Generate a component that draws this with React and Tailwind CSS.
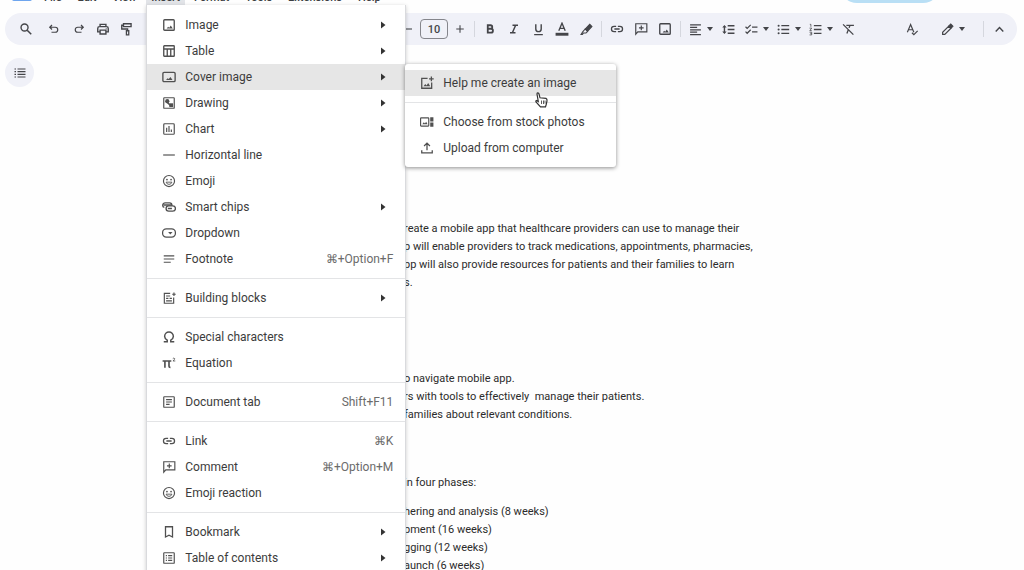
import React from "react";

function Svg({ size = 14, children, className = "" }) {
  return (
    <svg
      width={size}
      height={size}
      viewBox="0 0 24 24"
      fill="none"
      stroke="currentColor"
      strokeWidth="2"
      aria-hidden="true"
      className={"shrink-0 " + className}
    >
      {children}
    </svg>
  );
}

const fill = { fill: "currentColor", stroke: "none" };

const shapes = {
  search: (
    <>
      <circle cx="9.5" cy="9.5" r="6" strokeWidth="2.4" />
      <path d="M14 14l7 7" strokeWidth="2.6" />
    </>
  ),
  undo: <path d="M8 4L3.5 8.5 8 13M4 8.5h10.5a5 5 0 010 10H7" strokeWidth="2.4" />,
  redo: <path d="M16 4l4.500 4.500L16 13M20 8.500H9.500a5 5 0 000 10H17" strokeWidth="2.4" />,
  print: (
    <>
      <path d="M7 8V4h10v4M7 17H3v-6a3 3 0 013-3h12a3 3 0 013 3v6h-4" strokeWidth="2.4" />
      <path d="M7 14h10v6.500H7z" strokeWidth="2.400" />
      <circle cx="17.500" cy="11.500" r="1" {...fill} />
    </>
  ),
  paint: (
    <>
      <path d="M6 3h13v5H6zM6 5.500H3V12h10v3" strokeWidth="2.300" />
      <path d="M11 15h4v7h-4z" strokeWidth="2.200" />
    </>
  ),
  image: (
    <>
      <rect x="3" y="3" width="18" height="18" rx="1.500" strokeWidth="2.300" />
      <path d="M8 18l2.500-3 2 1.500 2.500-3.500 3.500 5z" {...fill} />
    </>
  ),
  table: (
    <>
      <rect x="3" y="3" width="18" height="18" rx="1" strokeWidth="2.300" />
      <path d="M3 8.500h18M9 9v12M15 9v12" strokeWidth="2.300" />
    </>
  ),
  cover: (
    <>
      <rect x="1.500" y="4" width="21" height="16" rx="2" strokeWidth="2.300" />
      <path d="M7 17l2.500-3 2 1.500 3-3.500 3.500 5z" {...fill} />
    </>
  ),
  drawing: (
    <>
      <rect x="3" y="3" width="18" height="18" rx="1" />
      <circle cx="9" cy="9" r="3.700" {...fill} />
      <path d="M12.500 12.500h6.500v6.500h-6.500z" {...fill} />
      <path d="M8 10l6 6" strokeWidth="2.500" />
    </>
  ),
  chart: (
    <>
      <rect x="3" y="3" width="18" height="18" rx="1.500" />
      <path d="M8 10v7M12 7v10M16 13v4" />
    </>
  ),
  rule: <path d="M2 12h20" />,
  emoji: (
    <>
      <circle cx="12" cy="12" r="9.500" />
      <circle cx="8.500" cy="9.500" r="1.500" {...fill} />
      <circle cx="15.500" cy="9.500" r="1.500" {...fill} />
      <path d="M7 14h10a5.200 5.200 0 01-10 0z" strokeWidth="1.500" />
    </>
  ),
  chips: (
    <>
      <rect x="7" y="10" width="16" height="9" rx="4.500" strokeWidth="2.300" />
      <path d="M17 10V9a4 4 0 00-4-4H5a4 4 0 00-1 7.800M3 8.500h13M10 14.500h7" strokeWidth="2.300" />
    </>
  ),
  dropdown: (
    <>
      <rect x="1" y="5" width="22" height="14" rx="6.500" strokeWidth="2.200" />
      <path d="M10.500 10.300h7.500l-3.700 4.200z" {...fill} />
    </>
  ),
  footnote: <path d="M3 6.500h18M3 12h18M3 17.500h12" />,
  blocks: (
    <>
      <path d="M14 4H4v17h16V11M17.500 5.500h6M20.500 2.500v6" />
      <path d="M7 8.500h7M7 12.500h4M7 17h10M13 12.500h4" />
    </>
  ),
  omega: (
    <path
      d="M3 20h6v-2.500A7.800 7.800 0 014.500 11a7.500 7.500 0 0115 0 7.800 7.800 0 01-4.500 6.500V20h6"
      strokeWidth="2.500"
    />
  ),
  pi: (
    <>
      <path d="M1 8.500h15M5 9v11M12 9v8.500q0 2 2.500 2" strokeWidth="2.800" />
      <path d="M18.500 4.500q2-2 3.300 0 .5 1.200-3 4h4" strokeWidth="1.400" />
    </>
  ),
  doctab: (
    <>
      <rect x="3" y="3" width="18" height="18" rx="1" />
      <path d="M7 8h10M7 12h10M7 16h6" />
    </>
  ),
  link: (
    <path
      d="M10.500 7.500H7a4.500 4.500 0 000 9h3.500M13.500 7.500H17a4.500 4.500 0 010 9h-3.500M7.500 12h9"
      strokeWidth="2.200"
    />
  ),
  comment: (
    <>
      <path d="M3 21V3h19v14H6.500z" />
      <path d="M12.500 6v8M8.500 10h8" />
    </>
  ),
  bookmark: <path d="M6 3h12v17.500l-6-3-6 3z" strokeWidth="2.200" />,
  toc: (
    <>
      <rect x="3" y="3" width="18" height="18" rx="1" />
      <path d="M6.500 8h2M10.500 8h7M6.500 12h2M10.500 12h7M6.500 16h2M10.500 16h7" />
    </>
  ),
  create: (
    <>
      <path d="M13 4H3v17h17V11M19.500 1v8M15.500 5h8" strokeWidth="2.200" />
      <path d="M6 17.500l3-4 2.300 2.700 2.700-4.200 3.500 5.500z" {...fill} />
    </>
  ),
  stock: (
    <>
      <rect x="1" y="5" width="14" height="14" rx="1" />
      <path d="M4 16l2.500-3.500 2 2 2-3 2.500 4.500z" {...fill} />
      <path d="M17.500 4h5.500v7h-5.500zM17.500 13h5.500v7h-5.500z" {...fill} />
    </>
  ),
  upload: <path d="M12 16V4M7 8.500l5-5 5 5M3 16v4.500h18V16" strokeWidth="2.200" />,
  minus: <path d="M4 12h16" strokeWidth="2.200" />,
  plus: <path d="M12 4.500v15M4.500 12h15" strokeWidth="2.200" />,
  bold: (
    <path d="M7.500 4.500h5.500a3.500 3.500 0 010 7H7.500zM7.500 11.500H14a3.900 3.900 0 010 7.800H7.500z" strokeWidth="3.600" />
  ),
  italic: <path d="M9 4.500h11M4 19.500h11M15 5L9 19" strokeWidth="3" />,
  underline: <path d="M7 2.500v8.500a5 5 0 0010 0V2.500M4 21.500h16" strokeWidth="2.600" />,
  textcolor: (
    <>
      <path d="M6.500 15L12 2l5.500 13M8.500 11h7" strokeWidth="2.300" />
      <path d="M1 18.500h22v5H1z" {...fill} />
    </>
  ),
  highlighter: (
    <>
      <path d="M10 11l8-8.500 4 4L14 15z" fill="currentColor" />
      <path d="M9.500 11l4.500 4.500-3 3H6.500L4.500 21H2l3-4.500z" strokeWidth="2" />
    </>
  ),
  align: <path d="M2 3.500h20M2 8h13M2 12.500h20M2 17h13M2 21.500h20" strokeWidth="2.300" />,
  spacing: (
    <>
      <path d="M10.500 5H23M10.500 12H23M10.500 19H23M4.500 6v12" strokeWidth="2.600" />
      <path d="M0.500 8.500l4-5 4 5zM0.500 15.500l4 5 4-5z" {...fill} />
    </>
  ),
  checklist: (
    <path d="M1 7l3 3 6.500-6.500M1 16l3 3 6.500-6.500M13 7.500h10M13 16.500h10" strokeWidth="2.200" />
  ),
  bullets: (
    <>
      <path d="M8 5h14.500M8 12h14.500M8 19h14.500" strokeWidth="2.400" />
      <circle cx="3" cy="5" r="1.900" {...fill} />
      <circle cx="3" cy="12" r="1.900" {...fill} />
      <circle cx="3" cy="19" r="1.900" {...fill} />
    </>
  ),
  numbers: (
    <>
      <path d="M9 5h14M9 12h14M9 19h14" strokeWidth="2.400" />
      <path
        d="M1.500 2.500h2V7M1 9.500h4l-3.500 4.500H5M1 17h4v5H1M2.500 19.500H5"
        strokeWidth="1.400"
      />
    </>
  ),
  clear: <path d="M2 2.500l19 19M8 4.500h14M14.500 5l-1.500 4M11.500 13L9 19.500" strokeWidth="2.400" />,
  spell: (
    <path d="M2.500 17L8.500 3l6 14M5 12.500h7M11 18l3.500 3.500 7-7" strokeWidth="2.200" />
  ),
  pencil: (
    <>
      <path d="M3 21v-4L14 6l4 4L7 21z" strokeWidth="2.200" />
      <path d="M14.500 5.500L18 2l4 4-3.500 3.500z" fill="currentColor" />
    </>
  ),
  up: <path d="M5 15.500l7-7 7 7" strokeWidth="2.600" />,
  outline: (
    <>
      <path d="M7 4h16M7 9.300h16M7 14.600h16M7 20h16" strokeWidth="2.400" />
      <path d="M1 4h3M1 9.300h3M1 14.600h3M1 20h3" strokeWidth="2.400" />
    </>
  ),
};

function Icon({ name, size, className }) {
  return (
    <Svg size={size} className={className}>
      {shapes[name]}
    </Svg>
  );
}

function Tool({ name, label, width = "w-6", size = 13 }) {
  return (
    <button type="button" aria-label={label} className={"flex h-6 items-center justify-center " + width}>
      <Icon name={name} size={size} />
    </button>
  );
}

function DropTool({ name, label }) {
  return (
    <button type="button" aria-label={label} className="flex h-6 w-8 items-center">
      <span className="flex w-[22px] justify-center">
        <Icon name={name} size={13} />
      </span>
      <svg width="8" height="4" viewBox="0 0 8 4" aria-hidden="true">
        <path d="M1 0h6L4 4z" fill="currentColor" />
      </svg>
    </button>
  );
}

function ToolDivider() {
  return <span className="mx-[3px] h-4 w-px bg-[#d5d7de]" />;
}

function Toolbar() {
  return (
    <div
      role="toolbar"
      aria-label="Formatting"
      className="mr-[7px] ml-[5px] flex h-8 shrink-0 items-center rounded-full bg-[#f0f1f8] px-[6px] text-[#444549]"
    >
      <Tool name="search" label="Search the menus" width="w-[30px]" size={14} />
      <Tool name="undo" label="Undo" width="w-[25px]" size={12} />
      <Tool name="redo" label="Redo" width="w-[25px]" size={12} />
      <Tool name="print" label="Print" size={14} />
      <Tool name="paint" label="Paint format" size={14} />
      <div className="w-[257px] shrink-0" />
      <Tool name="minus" label="Decrease font size" size={12} />
      <input
        aria-label="Font size"
        defaultValue="10"
        className="h-5 w-7 rounded-[4px] border border-[#85868c] text-center text-[11px] font-medium"
      />
      <Tool name="plus" label="Increase font size" width="w-[23px]" size={12} />
      <ToolDivider />
      <Tool name="bold" label="Bold" size={12} />
      <Tool name="italic" label="Italic" size={12} />
      <Tool name="underline" label="Underline" />
      <Tool name="textcolor" label="Text color" size={14} />
      <Tool name="highlighter" label="Highlight color" />
      <ToolDivider />
      <Tool name="link" label="Insert link" size={14} />
      <Tool name="comment" label="Add comment" size={14} />
      <Tool name="image" label="Insert image" size={14} />
      <ToolDivider />
      <DropTool name="align" label="Align" />
      <Tool name="spacing" label="Line spacing" />
      <DropTool name="checklist" label="Checklist" />
      <DropTool name="bullets" label="Bulleted list" />
      <DropTool name="numbers" label="Numbered list" />
      <Tool name="clear" label="Clear formatting" />
      <div className="ml-auto flex items-center">
        <Tool name="spell" label="Spelling and grammar check" />
        <span className="w-3" />
        <DropTool name="pencil" label="Editing mode" />
        <span className="w-3" />
        <ToolDivider />
        <Tool name="up" label="Hide the menus" />
      </div>
    </div>
  );
}

function Caret() {
  return (
    <svg width="5" height="8" viewBox="0 0 5 8" aria-hidden="true" className="mr-[7px]">
      <path d="M0 0.500l4.500 3.500-4.500 3.500z" fill="#333" />
    </svg>
  );
}

function MenuItem({ icon, label, keys, sub, active, children }) {
  return (
    <li role="none" className="relative">
      <button
        type="button"
        role="menuitem"
        className={
          "flex h-[26px] w-full items-center gap-[9px] pr-3 pl-[15px] text-left text-[12px] font-normal text-[#3c3c3c] " +
          (active ? "bg-[#e6e6e6]" : "")
        }
      >
        <Icon name={icon} size={14} className="text-[#505050]" />
        <span className="grow whitespace-nowrap">{label}</span>
        {keys && <span className="text-[#6b6b6b]">{keys}</span>}
        {sub && <Caret />}
      </button>
      {children}
    </li>
  );
}

function MenuDivider() {
  return <li role="separator" className="my-[6px] h-px bg-[#e3e4e6]" />;
}

function CoverSubmenu() {
  return (
    <ul
      role="menu"
      aria-label="Cover image"
      className="absolute top-0 left-full w-[211px] rounded-[3px] bg-white py-[6px] shadow-[0_1px_4px_rgba(0,0,0,0.45)]"
    >
      <MenuItem icon="create" label="Help me create an image" active />
      <MenuDivider />
      <MenuItem icon="stock" label="Choose from stock photos" />
      <MenuItem icon="upload" label="Upload from computer" />
      <li role="none" aria-hidden="true" className="absolute top-7 left-[130px]">
        <svg width="13" height="16" viewBox="0 0 13 16">
          <path
            d="M3.300 9.500L2 2.200Q1.900 1 2.800.9 3.700.8 4 2l1 3.800 6 .6Q12.300 7 12 9l-.8 3.500-.7 2.300H5.500L1 9.900Q.5 8.700 1.500 8.500z"
            fill="#fff"
            stroke="#333"
            strokeWidth="1.200"
          />
          <path d="M6.500 8.500v3.500M8.500 8.500v3.500M10 8.500v3" stroke="#333" strokeWidth=".8" />
        </svg>
      </li>
    </ul>
  );
}

function InsertMenu() {
  return (
    <ul
      role="menu"
      aria-label="Insert"
      className="absolute top-full left-0 z-10 w-[260px] border-x border-[#d9dadd] bg-white py-[7px] shadow-[0_1px_4px_rgba(0,0,0,0.2)]"
    >
      <MenuItem icon="image" label="Image" sub />
      <MenuItem icon="table" label="Table" sub />
      <MenuItem icon="cover" label="Cover image" sub active>
        <CoverSubmenu />
      </MenuItem>
      <MenuItem icon="drawing" label="Drawing" sub />
      <MenuItem icon="chart" label="Chart" sub />
      <MenuItem icon="rule" label="Horizontal line" />
      <MenuItem icon="emoji" label="Emoji" />
      <MenuItem icon="chips" label="Smart chips" sub />
      <MenuItem icon="dropdown" label="Dropdown" />
      <MenuItem icon="footnote" label="Footnote" keys="⌘+Option+F" />
      <MenuDivider />
      <MenuItem icon="blocks" label="Building blocks" sub />
      <MenuDivider />
      <MenuItem icon="omega" label="Special characters" />
      <MenuItem icon="pi" label="Equation" />
      <MenuDivider />
      <MenuItem icon="doctab" label="Document tab" keys="Shift+F11" />
      <MenuDivider />
      <MenuItem icon="link" label="Link" keys="⌘K" />
      <MenuItem icon="comment" label="Comment" keys="⌘+Option+M" />
      <MenuItem icon="emoji" label="Emoji reaction" />
      <MenuDivider />
      <MenuItem icon="bookmark" label="Bookmark" sub />
      <MenuItem icon="toc" label="Table of contents" sub />
    </ul>
  );
}

function MenuBar() {
  const item = "h-full px-2 pt-1";
  return (
    <header className="-mt-[14px] flex h-[19px] shrink-0 items-center text-[11px] font-medium text-[#3c3e42]">
      <span className="ml-3 h-[15px] w-5 self-start rounded-[2px] bg-[#6ea5ee]" />
      <nav aria-label="Menus" className="ml-1 flex h-full">
        <button type="button" className={item}>File</button>
        <button type="button" className={item}>Edit</button>
        <button type="button" className={item}>View</button>
        <div className="relative mr-px ml-[2px] h-full">
          <button type="button" className="h-full bg-[#e2e4e8] px-[5px] pt-1">Insert</button>
          <InsertMenu />
        </div>
        <button type="button" className={item}>Format</button>
        <button type="button" className={item}>Tools</button>
        <button type="button" className={item}>Extensions</button>
        <button type="button" className={item}>Help</button>
      </nav>
      <span className="mr-[84px] mb-[2px] ml-auto h-[17px] w-[100px] rounded-b-full bg-[#b9dff5]" />
    </header>
  );
}

function Lines({ items }) {
  return items.map((text) => (
    <p key={text} className="whitespace-pre">
      {text}
    </p>
  ));
}

export default function App() {
  return (
    <div className="flex h-screen flex-col overflow-hidden bg-[#fefefe] font-[Roboto,sans-serif]">
      <MenuBar />
      <div className="h-2 shrink-0" />
      <Toolbar />
      <main className="flex">
        <aside className="w-10 shrink-0 pt-[13px] pl-[5px]">
          <button
            type="button"
            aria-label="Show document outline"
            className="flex size-[29px] items-center justify-center rounded-full bg-[#f0f1f8] text-[#444549]"
          >
            <Icon name="outline" size={12} />
          </button>
        </aside>
        <article className="pt-[175px] pl-[364px] text-[11px] leading-[18px] text-[#2b2b2b]">
          <Lines
            items={[
              "reate a mobile app that healthcare providers can use to manage their",
              "p will enable providers to track medications, appointments, pharmacies,",
              "pp will also provide resources for patients and their families to learn",
              "s.",
            ]}
          />
          <div className="mt-[78px]">
            <Lines
              items={[
                "o navigate mobile app.",
                "rs with tools to effectively  manage their patients.",
                "families about relevant conditions.",
              ]}
            />
          </div>
          <p className="mt-[50px]">in four phases:</p>
          <div className="mt-[11px]">
            <Lines
              items={[
                "hering and analysis (8 weeks)",
                "pment (16 weeks)",
                "gging (12 weeks)",
                "aunch (6 weeks)",
              ]}
            />
          </div>
        </article>
      </main>
    </div>
  );
}
